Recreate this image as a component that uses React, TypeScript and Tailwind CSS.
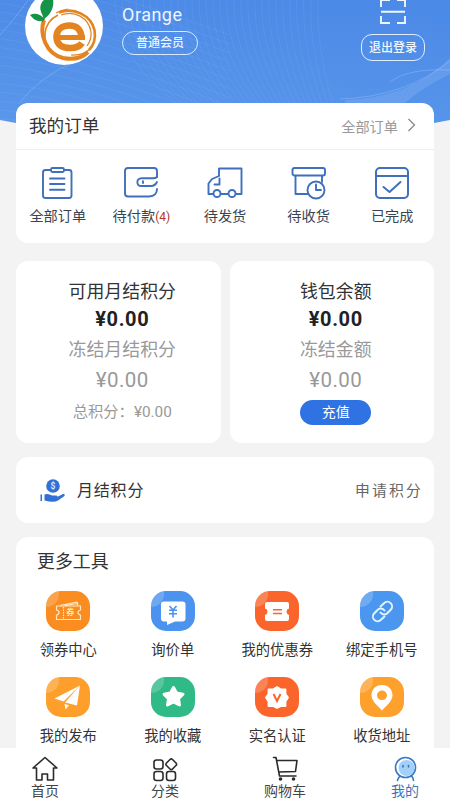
import type { ReactNode } from "react"

const orders = [
  { label: "全部订单", icon: <ClipboardIcon /> },
  { label: "待付款", count: 4, icon: <WalletIcon /> },
  { label: "待发货", icon: <TruckIcon /> },
  { label: "待收货", icon: <ParcelIcon /> },
  { label: "已完成", icon: <DoneIcon /> },
]

const tools = [
  { label: "领券中心", bg: "bg-[#fb8c20]", icon: <TicketsGlyph /> },
  { label: "询价单", bg: "bg-[#4b93ee]", icon: <InquiryGlyph /> },
  { label: "我的优惠券", bg: "bg-[#fb652b]", icon: <CouponGlyph /> },
  { label: "绑定手机号", bg: "bg-[#4b97f0]", icon: <LinkGlyph /> },
  { label: "我的发布", bg: "bg-[#fd9f2a]", icon: <PlaneGlyph /> },
  { label: "我的收藏", bg: "bg-[#2fba88]", icon: <StarGlyph /> },
  { label: "实名认证", bg: "bg-[#fb652b]", icon: <VerifiedGlyph /> },
  { label: "收货地址", bg: "bg-[#fda12c]", icon: <PinGlyph /> },
]

const tabs = [
  { label: "首页", icon: <HomeIcon /> },
  { label: "分类", icon: <CategoryIcon /> },
  { label: "购物车", icon: <CartIcon /> },
  { label: "我的", icon: <MeIcon />, active: true },
]

function OrderSvg({ children }: { children: ReactNode }) {
  return (
    <svg width="36" height="34" viewBox="0 0 36 34" fill="none" stroke="#3f70bd" strokeWidth="1.9" strokeLinecap="round" strokeLinejoin="round">
      {children}
    </svg>
  )
}

function ClipboardIcon() {
  return (
    <OrderSvg>
      <path d="M11 4H5.500Q3 4 3 6.500V29.500Q3 32 5.500 32H29Q31.500 32 31.500 29.500V6.500Q31.500 4 29 4H24" />
      <rect x="11" y="2" width="13" height="4" rx="1.500" />
      <path d="M10 12.500H24.500M10 18H24.500M10 23.700H24.500" />
    </OrderSvg>
  )
}

function WalletIcon() {
  return (
    <OrderSvg>
      <path d="M34 11V5Q34 2 31 2H5Q2 2 2 5V27.500Q2 30.500 5 30.500H26Q34 30 34 23" />
      <path d="M34 11Q32.500 12.300 30 12.300H18.500C13 12.300 13 20 18.500 20H28Q32 20 34 16" />
      <path d="M20 15.300V17" />
    </OrderSvg>
  )
}

function TruckIcon() {
  return (
    <OrderSvg>
      <path d="M6 28H1.500V17.500L5 13L12 10V2.500H34.500V28H29M21 28H14" />
      <path d="M12.500 12.500V18.500H7.500" />
      <circle cx="10" cy="27.500" r="3.500" />
      <circle cx="25" cy="27.500" r="3.500" />
    </OrderSvg>
  )
}

function ParcelIcon() {
  return (
    <OrderSvg>
      <rect x="1.500" y="2" width="32.500" height="7.500" rx="2" />
      <path d="M4.500 10V28H16.500M31 10V16" />
      <circle cx="25" cy="24" r="8.500" fill="white" />
      <path d="M25 18.500V24H30" />
    </OrderSvg>
  )
}

function DoneIcon() {
  return (
    <OrderSvg>
      <rect x="2" y="2" width="32" height="30" rx="4" strokeWidth="2" />
      <path d="M2.500 10H33.500" />
      <path d="M9.500 21L15.500 26L26.500 16" strokeWidth="2" />
    </OrderSvg>
  )
}

function TicketsGlyph() {
  return (
    <span className="relative flex">
      <svg width="44" height="40" viewBox="0 0 44 40" fill="none" stroke="#ffe9c4" strokeWidth="1.200" strokeLinejoin="round">
        <path d="M10.500 15H34.500V19Q32 19.500 32 21.500T34.500 24V28.500H10.500V24Q13 23.500 13 21.500T10.500 19Z" />
        <path d="M14 14.500L31 11L32 14.500M19 14.500L31.500 12.500" />
        <path d="M17.500 16V28" strokeDasharray="1.500 1" />
      </svg>
      <span className="absolute top-[17px] left-[20px] text-[8px] leading-[9px] font-bold text-[#ffe9c4]">券</span>
    </span>
  )
}

function InquiryGlyph() {
  return (
    <svg width="44" height="40" viewBox="0 0 44 40" fill="none">
      <path d="M13 10.500H31.500Q34.500 10.500 34.500 13.500V27.500Q34.500 30.500 31.500 30.500H24L16 34V30.500H13Q10 30.500 10 27.500V13.500Q10 10.500 13 10.500Z" fill="#fff" />
      <path d="M18.500 15L22 19L25.500 15M18 19.300H26M18 22.700H26M22 19V26.500" stroke="#4b93ee" strokeWidth="1.600" />
    </svg>
  )
}

function CouponGlyph() {
  return (
    <svg width="44" height="40" viewBox="0 0 44 40" fill="none">
      <path d="M12 11H32Q34 11 34 13V17.500Q31.500 18 31.500 20.500T34 24V28Q34 30 32 30H12Q10 30 10 28V24Q12.500 23 12.500 20.500T10 17.500V13Q10 11 12 11Z" fill="#fff" />
      <path d="M18 18.700H27M18 22.500H27" stroke="#fb652b" strokeWidth="1.400" />
    </svg>
  )
}

function LinkGlyph() {
  return (
    <svg width="44" height="40" viewBox="0 0 44 40" fill="none" stroke="#dff4ff" strokeWidth="2" strokeLinecap="round">
      <g transform="translate(10.500 8.500)">
        <path d="M10 13a4.600 4.600 0 0 0 7.200.300l3-3a4.600 4.600 0 0 0-6.700-6.600l-3.500 3.300" />
        <path d="M14 11a4.600 4.600 0 0 0-7.200-.300l-3 3a4.600 4.600 0 0 0 6.700 6.600l3.500-3.300" />
      </g>
    </svg>
  )
}

function PlaneGlyph() {
  return (
    <svg width="44" height="40" viewBox="0 0 44 40" fill="#fff">
      <path d="M34 8.500L8.500 21.500L17.500 24.500Z" />
      <path d="M34 8.500L19 25.500L31 28.500Z" />
      <path d="M18.500 27L23 28.300L19.500 32.500Z" />
    </svg>
  )
}

function StarGlyph() {
  return (
    <svg width="44" height="40" viewBox="0 0 44 40" fill="#fff" stroke="#fff" strokeWidth="3" strokeLinejoin="round">
      <path d="M22.500 10.500L25.500 16L32 17.200L27.500 21.700L28.500 28L22.500 25L16.500 28L17.500 21.700L13 17.200L19.500 16Z" />
    </svg>
  )
}

function VerifiedGlyph() {
  return (
    <svg width="44" height="40" viewBox="0 0 44 40" fill="none">
      <path d="M22 10L26 12.500L30.500 12.500L30.500 17L33 20.500L30.500 24.500L30.500 29L26 29L22 31L18 29L13.500 29L13.500 24.500L11 20.500L13.500 17L13.500 12.500L18 12.500Z" fill="#fff" stroke="#fff" strokeWidth="1.800" strokeLinejoin="round" />
      <path d="M18.500 17L22 24L25.500 17" stroke="#fb652b" strokeWidth="2" />
    </svg>
  )
}

function PinGlyph() {
  return (
    <svg width="44" height="40" viewBox="0 0 44 40">
      <path fillRule="evenodd" d="M22 8C15.500 8 11.500 12.700 11.500 18.300C11.500 24.500 18 29 22 33.500C26 29 32.500 24.500 32.500 18.300C32.500 12.700 28.500 8 22 8ZM22 13.500A5 4.800 0 1 1 22 23.100A5 4.800 0 1 1 22 13.500Z" fill="#fff" />
    </svg>
  )
}

function TabSvg({ children }: { children: ReactNode }) {
  return (
    <svg width="28" height="26" viewBox="0 0 28 26" fill="none" stroke="#2b2b2b" strokeWidth="1.600" strokeLinecap="round" strokeLinejoin="round">
      {children}
    </svg>
  )
}

function HomeIcon() {
  return (
    <TabSvg>
      <path d="M14 1.500L2 12H5.500V24H11V18H16.500V24H22.500V12H26Z" />
    </TabSvg>
  )
}

function CategoryIcon() {
  return (
    <TabSvg>
      <rect x="3" y="4" width="9" height="9" rx="2.500" />
      <rect x="3" y="15.500" width="9" height="9" rx="2.500" />
      <rect x="15.500" y="15.500" width="9" height="9" rx="2.500" />
      <rect x="16" y="4" width="8.500" height="8.500" rx="1.800" transform="rotate(45 20.250 8.250)" />
    </TabSvg>
  )
}

function CartIcon() {
  return (
    <TabSvg>
      <path d="M2.500 1.500H5L8.500 20H25M6 4.500H26L24.500 15.500L8 16" />
      <circle cx="9.500" cy="23" r="1.800" fill="#2b2b2b" stroke="none" />
      <circle cx="22.500" cy="23" r="1.800" fill="#2b2b2b" stroke="none" />
    </TabSvg>
  )
}

function MeIcon() {
  return (
    <TabSvg>
      <g stroke="#3479c9">
        <path d="M6.500 24.500Q7.500 20 11 20H19Q22 20 22.500 24.500" />
        <circle cx="14.500" cy="11.500" r="10" fill="#fff" />
        <circle cx="15.500" cy="12" r="8" fill="#a3d0fb" stroke="none" />
        <path d="M12 9.500V11M17.500 9.500V11" />
      </g>
    </TabSvg>
  )
}

/* Curved backdrop with fine wave lines */
function HeroBackdrop() {
  const waves = Array.from({ length: 30 }, (_, i) => i)
  return (
    <svg className="absolute inset-0" width="450" height="145" viewBox="0 0 450 145" fill="none">
      <defs>
        <linearGradient id="hero" x1="0.300" y1="1" x2="0.500" y2="0">
          <stop offset="0" stopColor="#5b98ec" />
          <stop offset="1" stopColor="#4c8ae7" />
        </linearGradient>
        <clipPath id="heroClip">
          <path d="M0 0H450V120Q225 165 0 120Z" />
        </clipPath>
      </defs>
      <g clipPath="url(#heroClip)">
        <rect width="450" height="145" fill="url(#hero)" />
        <g stroke="#a7cafa" strokeOpacity="0.180" strokeWidth="0.700">
          {waves.map((i) => (
            <path key={i} d={`M${i * 7 + 115} -5Q${i * 7 + 112} ${62 - i * 0.5} ${i * 5 + 190} 112`} />
          ))}
          {waves.slice(0, 18).map((i) => (
            <path key={i} d={`M-10 ${i * 9 - 35}Q100 ${i * 8 - 12} 230 ${i * 9 + 35}`} />
          ))}
        </g>
        <path d="M0 35Q18 15 28 0M20 102Q42 75 75 62" stroke="#a7cafa" strokeOpacity="0.350" />
        <path d="M345 100Q410 98 450 58V74Q422 88 405 103H345Z" fill="#a7cafa" fillOpacity="0.220" />
        <path d="M390 82Q408 68 450 70M340 99Q405 97 450 61" stroke="#b9d5fb" strokeOpacity="0.300" />
      </g>
    </svg>
  )
}

function Avatar() {
  return (
    <svg className="-mt-[13px] shrink-0" width="78" height="78" viewBox="0 0 78 78" fill="none">
      <circle cx="39" cy="39" r="39" fill="#fff" />
      <g stroke="#e38420">
        <path d="M19 33C14 47 21 67 38 71C48 73 57 71 63 65" strokeWidth="4" />
        <path d="M34 25.500C49 20 66 28 69.500 43C71 52 69 58 64 63" strokeWidth="2.600" />
        <path d="M33 28C17 36 16 56 28 66" strokeWidth="1.600" />
        <path d="M31 26Q36 23 43 22M46 68Q58 69 66 61" strokeWidth="1.200" />
        <path d="M36 28C50 23 64 31 66 45C66.500 51 65 55 62 59" strokeWidth="1.200" />
        <path d="M34 50.500H60" strokeWidth="5" />
        <path d="M56.500 51C56.500 42 51 38.500 44.500 38.500C37 38.500 31.500 42.500 31.500 50C31.500 57.500 37 61 45 61C50 61 54.500 60 57 56" strokeWidth="6.600" />
      </g>
      <path d="M17 27C12 17 19 11 27 9C30 16 28 26 19 32Z" fill="#159447" />
      <path d="M5 28Q12 24 20 32Q13 38 5 28Z" fill="#159447" />
      <path d="M19 30Q20 33 17 35" stroke="#159447" />
    </svg>
  )
}

function Header() {
  return (
    <header className="relative h-[103px] shrink-0">
      <HeroBackdrop />
      <div className="relative flex pl-[25px]">
        <Avatar />
        <div className="flex flex-col items-start pl-[19px]">
          <span className="mt-1 text-[18px] leading-[22px] tracking-[0.5px] text-[#eef6ff]">Orange</span>
          <span className="mt-[5px] flex h-6 w-[76px] items-center justify-center rounded-full border-[1.5px] border-[#d5ecff] text-[12px] leading-4 font-medium text-[#eaf6ff]">
            普通会员
          </span>
        </div>
        <div className="mr-[25px] ml-auto flex w-[64px] flex-col items-center">
          <svg className="-mt-[3px]" width="28" height="28" viewBox="0 0 28 28" fill="none" stroke="#edf7ff" strokeWidth="1.900">
            <path d="M2 10V3H11M18 3H26V10M2 19V26H11M18 26H26V19M2 14.700H26" />
          </svg>
          <button className="mt-[9px] flex h-[27px] w-full items-center justify-center rounded-[11px] border border-[#dceeff] text-[12px] font-medium text-[#eef8ff]">
            退出登录
          </button>
        </div>
      </div>
    </header>
  )
}

function OrdersCard() {
  return (
    <section className="relative h-[140px] shrink-0 rounded-xl bg-white">
      <div className="flex h-[47px] items-center border-b border-[#eeeeee] pr-[17px] pl-[13px]">
        <h2 className="text-[17.6px] leading-6 text-[#333]">我的订单</h2>
        <span className="mt-px ml-auto text-[14.2px] leading-5 text-[#999]">全部订单</span>
        <svg className="mb-[2px] ml-[9px]" width="10" height="14" viewBox="0 0 10 14" fill="none" stroke="#888" strokeWidth="1.300">
          <path d="M1.500 1L7.500 7L1.500 13" />
        </svg>
      </div>
      <div className="grid grid-cols-5 pt-4">
        {orders.map((o) => (
          <div key={o.label} className="flex flex-col items-center whitespace-nowrap">
            {o.icon}
            <span className="mt-[5px] text-[14.2px] leading-[22px] text-[#3a4450]">
              {o.label}
              {o.count && <span className="text-[12px] text-[#b3332c]">({o.count})</span>}
            </span>
          </div>
        ))}
      </div>
    </section>
  )
}

function BalanceCards() {
  return (
    <div className="mt-[18px] grid h-[182px] shrink-0 grid-cols-2 gap-[9px] text-center">
      <section className="rounded-xl bg-white pt-[19px] pl-2">
        <div className="text-[17.900px] leading-6 text-[#333]">可用月结积分</div>
        <div className="mt-[3px] text-[20px] leading-6 font-bold tracking-[0.6px] text-[#222]">¥0.00</div>
        <div className="mt-[7px] text-[17.900px] leading-6 text-[#999]">冻结月结积分</div>
        <div className="mt-[6px] text-[20.500px] leading-6 tracking-[0.5px] text-[#999]">¥0.00</div>
        <div className="mt-2 text-[15.300px] leading-6 text-[#999]">总积分：¥0.00</div>
      </section>
      <section className="flex flex-col items-center rounded-xl bg-white pt-[19px] pl-2">
        <div className="text-[17.900px] leading-6 text-[#333]">钱包余额</div>
        <div className="mt-[3px] text-[20px] leading-6 font-bold tracking-[0.6px] text-[#222]">¥0.00</div>
        <div className="mt-[7px] text-[17.900px] leading-6 text-[#999]">冻结金额</div>
        <div className="mt-[6px] text-[20.500px] leading-6 tracking-[0.5px] text-[#999]">¥0.00</div>
        <button className="mt-2 h-[25px] w-[71px] rounded-full bg-[#2f72e4] text-[14px] leading-[25px] text-white">充值</button>
      </section>
    </div>
  )
}

function PointsRow() {
  return (
    <section className="mt-[14px] flex h-[66px] shrink-0 items-center rounded-xl bg-white pt-[2px] pr-[11px] pl-6">
      <svg width="26" height="24" viewBox="0 0 26 24" fill="#3270d6">
        <circle cx="13" cy="7" r="6.800" />
        <path d="M4.500 15.500Q8 14 12 16.500H16Q18.500 17 17 18L23 15Q25.500 14.500 24.500 17L18 21.500Q14 24 4.500 21.500ZM0.500 15.500H2V22H0.500Z" />
        <text x="13" y="10" textAnchor="middle" fontSize="8.500" fontWeight="bold" fill="#d5e8ff">$</text>
      </svg>
      <span className="ml-[11px] text-[16px] tracking-[0.8px] text-[#333]">月结积分</span>
      <span className="ml-auto text-[14.800px] tracking-[2.200px] text-[#666]">申请积分</span>
    </section>
  )
}

function ToolsCard() {
  return (
    <section className="mt-[14px] h-[211px] shrink-0 overflow-hidden rounded-t-xl bg-white pt-[13px]">
      <h2 className="pl-[21px] text-[17.900px] leading-6 text-[#333]">更多工具</h2>
      <div className="grid grid-cols-4 gap-y-[17px] pt-[17px]">
        {tools.map((t) => (
          <div key={t.label} className="flex h-[69px] flex-col items-center whitespace-nowrap">
            <span className={`relative block h-10 w-11 shrink-0 overflow-hidden rounded-[15px] ${t.bg}`}>
              <span className="absolute -top-3 -left-3 h-7 w-[25px] rounded-full bg-white/20" />
              {t.icon}
            </span>
            <span className="mt-2 text-[14.300px] leading-[22px] text-[#333]">{t.label}</span>
          </div>
        ))}
      </div>
    </section>
  )
}

function TabBar() {
  return (
    <nav className="flex h-[52px] shrink-0 justify-between bg-white px-[22px] pt-2">
      {tabs.map((t) => (
        <div key={t.label} className="flex w-[46px] flex-col items-center whitespace-nowrap">
          {t.icon}
          <span className={`text-[14px] leading-[18px] ${t.active ? "text-[#3b74b8]" : "text-[#444]"}`}>{t.label}</span>
        </div>
      ))}
    </nav>
  )
}

export default function App() {
  return (
    <div className="flex h-[800px] w-[450px] flex-col overflow-hidden bg-[#f3f3f3] font-['Roboto','Noto_Sans_CJK_SC',sans-serif]">
      <Header />
      <main className="flex flex-1 flex-col px-4">
        <OrdersCard />
        <BalanceCards />
        <PointsRow />
        <ToolsCard />
      </main>
      <TabBar />
    </div>
  )
}
